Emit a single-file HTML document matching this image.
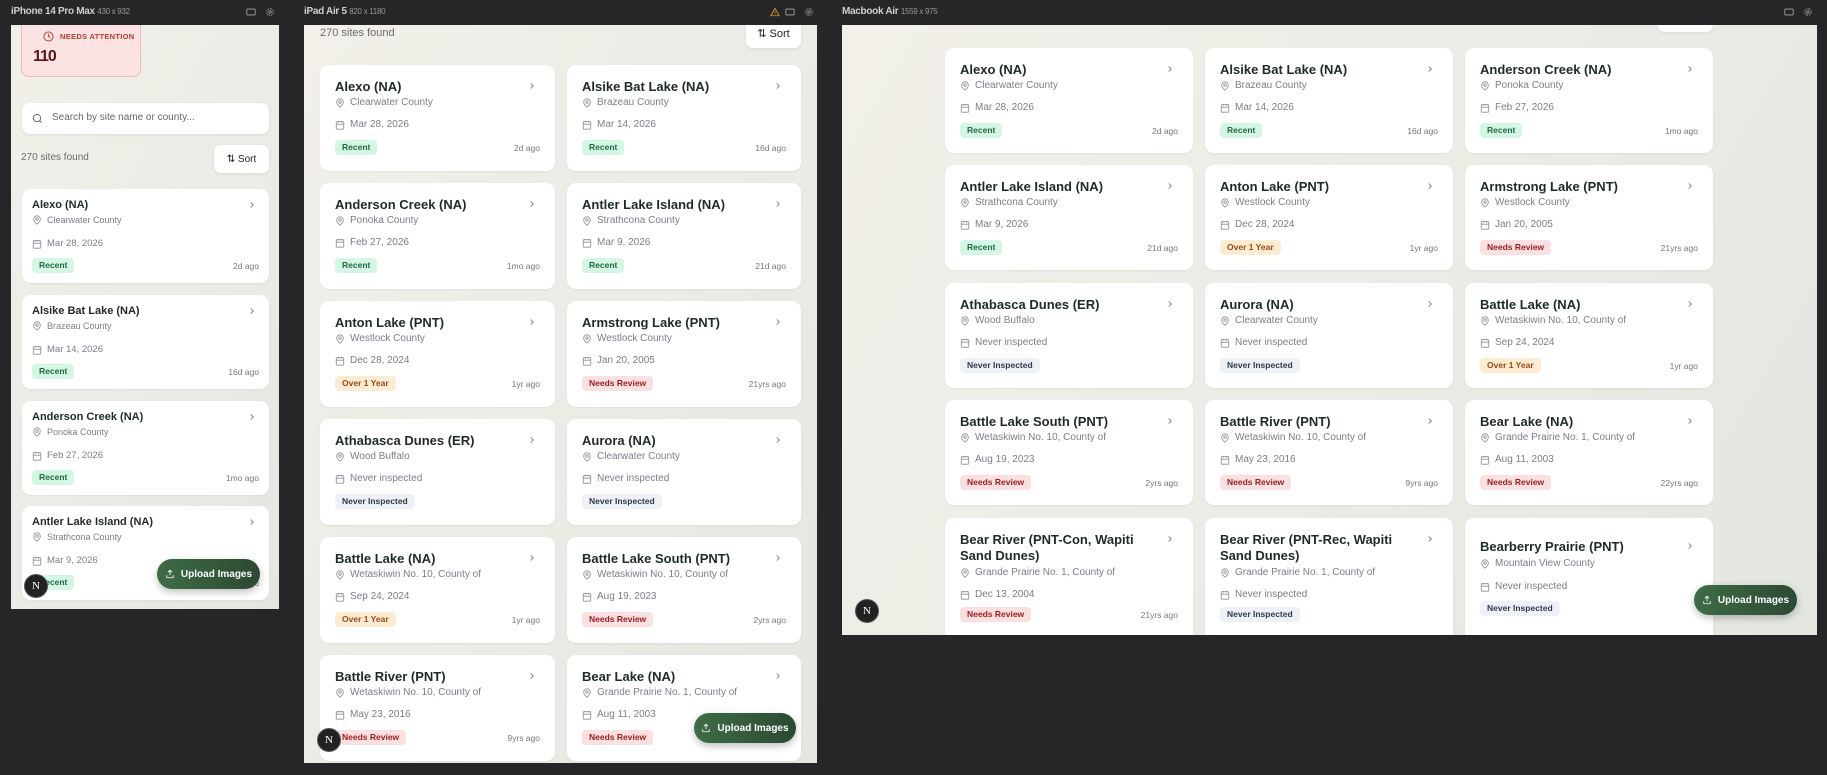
<!DOCTYPE html>
<html><head><meta charset="utf-8">
<style>
*{box-sizing:border-box;margin:0;padding:0}
body{width:1827px;height:775px;background:#262628;font-family:"Liberation Sans",sans-serif;position:relative;overflow:hidden}
.hdr{position:absolute;top:6px;font-size:10px;font-weight:bold;color:#d0d0d0;letter-spacing:-0.3px}
.hdr small{font-size:8px;font-weight:normal;color:#999}
.ico{position:absolute;top:7px}
.frame{position:absolute;overflow:hidden;background:linear-gradient(120deg,#f2f0e9 0%,#ebece6 50%,#e3e7e0 100%)}
.card{position:absolute;background:#fff;border-radius:9px;box-shadow:0 1px 2px rgba(0,0,0,.05)}
.card .t{position:absolute;left:15px;top:14px;right:40px;font-size:13px;font-weight:bold;color:#1f2b26;line-height:16px}
.card .ch{position:absolute;right:18px;top:16px;width:10px;height:10px}
.card .c,.card .d{position:absolute;left:15px;font-size:10px;color:#7a7f86;white-space:nowrap;display:flex;align-items:center;gap:5px}
.card .c{top:32px}
.card .d{top:54px}
.card .b{position:absolute;left:15px;top:75px;height:15px;line-height:15px;padding:0 7px;border-radius:4px;font-size:8.5px;font-weight:bold}
.card .a{position:absolute;right:15px;top:78px;font-size:8.5px;color:#777}
.ph .t{left:10px;top:8px;font-size:11px}
.ph .ch{right:12px;top:11px}
.ph .c,.ph .d,.ph .b{left:10px}
.ph .c{top:26px;font-size:9px}
.ph .d{top:49px;font-size:9.5px}
.ph .b{top:69px}
.ph .a{right:10px;top:72px}
.rec{background:#d4f6e4;color:#1e6a44}
.old{background:#fdebd2;color:#9a4b10}
.nr{background:#fbe0e1;color:#9b1c1c}
.ni{background:#eef1f6;color:#2f3a4a}
svg.s{width:10px;height:10px;flex:none}
.up{position:absolute;border-radius:16px;background:linear-gradient(90deg,#3e6c46,#2c4a32);color:#fff;font-size:10px;font-weight:bold;display:flex;align-items:center;justify-content:center;gap:6px;box-shadow:0 3px 8px rgba(0,0,0,.25)}
.n{position:absolute;width:24px;height:24px;border-radius:50%;background:#222;border:1px solid #555;color:#fff;font-size:11px;text-align:center;line-height:22px;font-family:"Liberation Serif",serif}
.sort{position:absolute;background:#fff;border-radius:7px;box-shadow:0 1px 3px rgba(0,0,0,.08);font-size:11px;color:#222;display:flex;align-items:center;justify-content:center;gap:5px}
.cnt{position:absolute;font-size:11px;color:#6b6b6b}
</style></head><body>
<svg width="0" height="0" style="position:absolute">
<defs>
<symbol id="pin" viewBox="0 0 24 24"><path d="M20 10c0 6-8 12-8 12s-8-6-8-12a8 8 0 0 1 16 0Z" fill="none" stroke="#8a8f96" stroke-width="2"/><circle cx="12" cy="10" r="3" fill="none" stroke="#8a8f96" stroke-width="2"/></symbol>
<symbol id="cal" viewBox="0 0 24 24"><rect x="3" y="4" width="18" height="18" rx="2" fill="none" stroke="#8a8f96" stroke-width="2"/><path d="M16 2v4M8 2v4M3 10h18" fill="none" stroke="#8a8f96" stroke-width="2"/></symbol>
<symbol id="chv" viewBox="0 0 24 24"><path d="m9 18 6-6-6-6" fill="none" stroke="#666" stroke-width="2"/></symbol>
<symbol id="upl" viewBox="0 0 24 24"><path d="M12 15V3M7 8l5-5 5 5M4 15v4a2 2 0 0 0 2 2h12a2 2 0 0 0 2-2v-4" fill="none" stroke="#fff" stroke-width="2"/></symbol>
<symbol id="mon" viewBox="0 0 24 24"><rect x="2" y="5" width="20" height="14" rx="2" fill="none" stroke="#aaa" stroke-width="2"/></symbol>
<symbol id="gear" viewBox="0 0 24 24"><circle cx="12" cy="12" r="3" fill="none" stroke="#aaa" stroke-width="2"/><circle cx="12" cy="12" r="8" fill="none" stroke="#aaa" stroke-width="2" stroke-dasharray="4 2.3"/></symbol>
</defs></svg>

<div class="hdr" style="left:11px">iPhone 14 Pro Max <small>430 x 932</small></div>
<svg class="ico" style="left:246px" width="10" height="10"><use href="#mon"/></svg>
<svg class="ico" style="left:265px" width="10" height="10"><use href="#gear"/></svg>
<div class="hdr" style="left:304px">iPad Air 5 <small>820 x 1180</small></div>
<svg class="ico" style="left:770px" width="10" height="10" viewBox="0 0 24 24"><path d="M12 3 2 21h20Z M12 10v5 M12 17v1" fill="none" stroke="#d4a017" stroke-width="2"/></svg>
<svg class="ico" style="left:785px" width="10" height="10"><use href="#mon"/></svg>
<svg class="ico" style="left:804px" width="10" height="10"><use href="#gear"/></svg>
<div class="hdr" style="left:842px">Macbook Air <small>1559 x 975</small></div>
<svg class="ico" style="left:1784px" width="10" height="10"><use href="#mon"/></svg>
<svg class="ico" style="left:1803px" width="10" height="10"><use href="#gear"/></svg>

<div class="frame" style="left:11px;top:25px;width:268px;height:584px">
  <div style="position:absolute;left:10px;top:-8px;width:120px;height:60px;background:#fbe3e3;border:1px solid #efb9b9;border-radius:8px">
    <svg style="position:absolute;left:21px;top:13px" width="11" height="11" viewBox="0 0 24 24"><circle cx="12" cy="12" r="10" fill="none" stroke="#c0392b" stroke-width="2"/><path d="M12 6v6l4 2" fill="none" stroke="#c0392b" stroke-width="2"/></svg>
    <div style="position:absolute;left:38px;top:14px;font-size:7.5px;font-weight:bold;color:#c0392b;letter-spacing:.3px">NEEDS ATTENTION</div>
    <div style="position:absolute;left:11px;top:30px;font-size:16px;font-weight:bold;color:#5a1616;letter-spacing:-1px">110</div>
  </div>
  <div style="position:absolute;left:11px;top:78px;width:247px;height:31px;background:#fff;border-radius:8px;box-shadow:0 1px 3px rgba(0,0,0,.08)">
    <svg style="position:absolute;left:10px;top:10px" width="11" height="11" viewBox="0 0 24 24"><circle cx="11" cy="11" r="8" fill="none" stroke="#666" stroke-width="2"/><path d="m21 21-4.3-4.3" stroke="#666" stroke-width="2"/></svg>
    <div style="position:absolute;left:30px;top:9px;font-size:10px;color:#666">Search by site name or county...</div>
  </div>
  <div class="cnt" style="left:10px;top:127px;font-size:10px">270 sites found</div>
  <div class="sort" style="left:203px;top:120px;width:55px;height:28px;font-size:10px">⇅ Sort</div>

  <div class="card ph" style="left:11px;top:164px;width:247px;height:94px"><div class="t">Alexo (NA)</div><svg class="ch"><use href="#chv"/></svg><div class="c"><svg class="s"><use href="#pin"/></svg>Clearwater County</div><div class="d"><svg class="s"><use href="#cal"/></svg>Mar 28, 2026</div><span class="b rec">Recent</span><span class="a">2d ago</span></div>
  <div class="card ph" style="left:11px;top:270px;width:247px;height:94px"><div class="t">Alsike Bat Lake (NA)</div><svg class="ch"><use href="#chv"/></svg><div class="c"><svg class="s"><use href="#pin"/></svg>Brazeau County</div><div class="d"><svg class="s"><use href="#cal"/></svg>Mar 14, 2026</div><span class="b rec">Recent</span><span class="a">16d ago</span></div>
  <div class="card ph" style="left:11px;top:376px;width:247px;height:94px"><div class="t">Anderson Creek (NA)</div><svg class="ch"><use href="#chv"/></svg><div class="c"><svg class="s"><use href="#pin"/></svg>Ponoka County</div><div class="d"><svg class="s"><use href="#cal"/></svg>Feb 27, 2026</div><span class="b rec">Recent</span><span class="a">1mo ago</span></div>
  <div class="card ph" style="left:11px;top:481px;width:247px;height:94px"><div class="t">Antler Lake Island (NA)</div><svg class="ch"><use href="#chv"/></svg><div class="c"><svg class="s"><use href="#pin"/></svg>Strathcona County</div><div class="d"><svg class="s"><use href="#cal"/></svg>Mar 9, 2026</div><span class="b rec">Recent</span><span class="a">21d ago</span></div>
  <div class="up" style="left:146px;top:534px;width:103px;height:30px"><svg width="10" height="10"><use href="#upl"/></svg>Upload Images</div>
  <div class="n" style="left:13px;top:549px">N</div>
</div>

<div class="frame" style="left:304px;top:25px;width:513px;height:738px">
  <div class="cnt" style="left:16px;top:2px">270 sites found</div>
  <div class="sort" style="left:442px;top:-6px;width:55px;height:29px">⇅ Sort</div>
  <div class="card" style="left:16px;top:40px;width:235px;height:106px"><div class="t">Alexo (NA)</div><svg class="ch"><use href="#chv"/></svg><div class="c"><svg class="s"><use href="#pin"/></svg>Clearwater County</div><div class="d"><svg class="s"><use href="#cal"/></svg>Mar 28, 2026</div><span class="b rec">Recent</span><span class="a">2d ago</span></div>
  <div class="card" style="left:263px;top:40px;width:234px;height:106px"><div class="t">Alsike Bat Lake (NA)</div><svg class="ch"><use href="#chv"/></svg><div class="c"><svg class="s"><use href="#pin"/></svg>Brazeau County</div><div class="d"><svg class="s"><use href="#cal"/></svg>Mar 14, 2026</div><span class="b rec">Recent</span><span class="a">16d ago</span></div>
  <div class="card" style="left:16px;top:158px;width:235px;height:106px"><div class="t">Anderson Creek (NA)</div><svg class="ch"><use href="#chv"/></svg><div class="c"><svg class="s"><use href="#pin"/></svg>Ponoka County</div><div class="d"><svg class="s"><use href="#cal"/></svg>Feb 27, 2026</div><span class="b rec">Recent</span><span class="a">1mo ago</span></div>
  <div class="card" style="left:263px;top:158px;width:234px;height:106px"><div class="t">Antler Lake Island (NA)</div><svg class="ch"><use href="#chv"/></svg><div class="c"><svg class="s"><use href="#pin"/></svg>Strathcona County</div><div class="d"><svg class="s"><use href="#cal"/></svg>Mar 9, 2026</div><span class="b rec">Recent</span><span class="a">21d ago</span></div>
  <div class="card" style="left:16px;top:276px;width:235px;height:106px"><div class="t">Anton Lake (PNT)</div><svg class="ch"><use href="#chv"/></svg><div class="c"><svg class="s"><use href="#pin"/></svg>Westlock County</div><div class="d"><svg class="s"><use href="#cal"/></svg>Dec 28, 2024</div><span class="b old">Over 1 Year</span><span class="a">1yr ago</span></div>
  <div class="card" style="left:263px;top:276px;width:234px;height:106px"><div class="t">Armstrong Lake (PNT)</div><svg class="ch"><use href="#chv"/></svg><div class="c"><svg class="s"><use href="#pin"/></svg>Westlock County</div><div class="d"><svg class="s"><use href="#cal"/></svg>Jan 20, 2005</div><span class="b nr">Needs Review</span><span class="a">21yrs ago</span></div>
  <div class="card" style="left:16px;top:394px;width:235px;height:106px"><div class="t">Athabasca Dunes (ER)</div><svg class="ch"><use href="#chv"/></svg><div class="c"><svg class="s"><use href="#pin"/></svg>Wood Buffalo</div><div class="d"><svg class="s"><use href="#cal"/></svg>Never inspected</div><span class="b ni">Never Inspected</span></div>
  <div class="card" style="left:263px;top:394px;width:234px;height:106px"><div class="t">Aurora (NA)</div><svg class="ch"><use href="#chv"/></svg><div class="c"><svg class="s"><use href="#pin"/></svg>Clearwater County</div><div class="d"><svg class="s"><use href="#cal"/></svg>Never inspected</div><span class="b ni">Never Inspected</span></div>
  <div class="card" style="left:16px;top:512px;width:235px;height:106px"><div class="t">Battle Lake (NA)</div><svg class="ch"><use href="#chv"/></svg><div class="c"><svg class="s"><use href="#pin"/></svg>Wetaskiwin No. 10, County of</div><div class="d"><svg class="s"><use href="#cal"/></svg>Sep 24, 2024</div><span class="b old">Over 1 Year</span><span class="a">1yr ago</span></div>
  <div class="card" style="left:263px;top:512px;width:234px;height:106px"><div class="t">Battle Lake South (PNT)</div><svg class="ch"><use href="#chv"/></svg><div class="c"><svg class="s"><use href="#pin"/></svg>Wetaskiwin No. 10, County of</div><div class="d"><svg class="s"><use href="#cal"/></svg>Aug 19, 2023</div><span class="b nr">Needs Review</span><span class="a">2yrs ago</span></div>
  <div class="card" style="left:16px;top:630px;width:235px;height:106px"><div class="t">Battle River (PNT)</div><svg class="ch"><use href="#chv"/></svg><div class="c"><svg class="s"><use href="#pin"/></svg>Wetaskiwin No. 10, County of</div><div class="d"><svg class="s"><use href="#cal"/></svg>May 23, 2016</div><span class="b nr">Needs Review</span><span class="a">9yrs ago</span></div>
  <div class="card" style="left:263px;top:630px;width:234px;height:106px"><div class="t">Bear Lake (NA)</div><svg class="ch"><use href="#chv"/></svg><div class="c"><svg class="s"><use href="#pin"/></svg>Grande Prairie No. 1, County of</div><div class="d"><svg class="s"><use href="#cal"/></svg>Aug 11, 2003</div><span class="b nr">Needs Review</span><span class="a">22yrs ago</span></div>
  <div class="up" style="left:390px;top:688px;width:102px;height:30px"><svg width="10" height="10"><use href="#upl"/></svg>Upload Images</div>
  <div class="n" style="left:13px;top:703px">N</div>
</div>

<div class="frame" style="left:842px;top:25px;width:975px;height:610px">
  <div class="sort" style="left:816px;top:-20px;width:55px;height:27px"></div>
  <div class="card" style="left:103px;top:23px;width:248px;height:105px"><div class="t">Alexo (NA)</div><svg class="ch"><use href="#chv"/></svg><div class="c"><svg class="s"><use href="#pin"/></svg>Clearwater County</div><div class="d"><svg class="s"><use href="#cal"/></svg>Mar 28, 2026</div><span class="b rec">Recent</span><span class="a">2d ago</span></div>
  <div class="card" style="left:363px;top:23px;width:248px;height:105px"><div class="t">Alsike Bat Lake (NA)</div><svg class="ch"><use href="#chv"/></svg><div class="c"><svg class="s"><use href="#pin"/></svg>Brazeau County</div><div class="d"><svg class="s"><use href="#cal"/></svg>Mar 14, 2026</div><span class="b rec">Recent</span><span class="a">16d ago</span></div>
  <div class="card" style="left:623px;top:23px;width:248px;height:105px"><div class="t">Anderson Creek (NA)</div><svg class="ch"><use href="#chv"/></svg><div class="c"><svg class="s"><use href="#pin"/></svg>Ponoka County</div><div class="d"><svg class="s"><use href="#cal"/></svg>Feb 27, 2026</div><span class="b rec">Recent</span><span class="a">1mo ago</span></div>
  <div class="card" style="left:103px;top:140px;width:248px;height:105px"><div class="t">Antler Lake Island (NA)</div><svg class="ch"><use href="#chv"/></svg><div class="c"><svg class="s"><use href="#pin"/></svg>Strathcona County</div><div class="d"><svg class="s"><use href="#cal"/></svg>Mar 9, 2026</div><span class="b rec">Recent</span><span class="a">21d ago</span></div>
  <div class="card" style="left:363px;top:140px;width:248px;height:105px"><div class="t">Anton Lake (PNT)</div><svg class="ch"><use href="#chv"/></svg><div class="c"><svg class="s"><use href="#pin"/></svg>Westlock County</div><div class="d"><svg class="s"><use href="#cal"/></svg>Dec 28, 2024</div><span class="b old">Over 1 Year</span><span class="a">1yr ago</span></div>
  <div class="card" style="left:623px;top:140px;width:248px;height:105px"><div class="t">Armstrong Lake (PNT)</div><svg class="ch"><use href="#chv"/></svg><div class="c"><svg class="s"><use href="#pin"/></svg>Westlock County</div><div class="d"><svg class="s"><use href="#cal"/></svg>Jan 20, 2005</div><span class="b nr">Needs Review</span><span class="a">21yrs ago</span></div>
  <div class="card" style="left:103px;top:258px;width:248px;height:105px"><div class="t">Athabasca Dunes (ER)</div><svg class="ch"><use href="#chv"/></svg><div class="c"><svg class="s"><use href="#pin"/></svg>Wood Buffalo</div><div class="d"><svg class="s"><use href="#cal"/></svg>Never inspected</div><span class="b ni">Never Inspected</span></div>
  <div class="card" style="left:363px;top:258px;width:248px;height:105px"><div class="t">Aurora (NA)</div><svg class="ch"><use href="#chv"/></svg><div class="c"><svg class="s"><use href="#pin"/></svg>Clearwater County</div><div class="d"><svg class="s"><use href="#cal"/></svg>Never inspected</div><span class="b ni">Never Inspected</span></div>
  <div class="card" style="left:623px;top:258px;width:248px;height:105px"><div class="t">Battle Lake (NA)</div><svg class="ch"><use href="#chv"/></svg><div class="c"><svg class="s"><use href="#pin"/></svg>Wetaskiwin No. 10, County of</div><div class="d"><svg class="s"><use href="#cal"/></svg>Sep 24, 2024</div><span class="b old">Over 1 Year</span><span class="a">1yr ago</span></div>
  <div class="card" style="left:103px;top:375px;width:248px;height:105px"><div class="t">Battle Lake South (PNT)</div><svg class="ch"><use href="#chv"/></svg><div class="c"><svg class="s"><use href="#pin"/></svg>Wetaskiwin No. 10, County of</div><div class="d"><svg class="s"><use href="#cal"/></svg>Aug 19, 2023</div><span class="b nr">Needs Review</span><span class="a">2yrs ago</span></div>
  <div class="card" style="left:363px;top:375px;width:248px;height:105px"><div class="t">Battle River (PNT)</div><svg class="ch"><use href="#chv"/></svg><div class="c"><svg class="s"><use href="#pin"/></svg>Wetaskiwin No. 10, County of</div><div class="d"><svg class="s"><use href="#cal"/></svg>May 23, 2016</div><span class="b nr">Needs Review</span><span class="a">9yrs ago</span></div>
  <div class="card" style="left:623px;top:375px;width:248px;height:105px"><div class="t">Bear Lake (NA)</div><svg class="ch"><use href="#chv"/></svg><div class="c"><svg class="s"><use href="#pin"/></svg>Grande Prairie No. 1, County of</div><div class="d"><svg class="s"><use href="#cal"/></svg>Aug 11, 2003</div><span class="b nr">Needs Review</span><span class="a">22yrs ago</span></div>
  <div class="card" style="left:103px;top:493px;width:248px;height:130px"><div class="t" style="top:14px">Bear River (PNT-Con, Wapiti Sand Dunes)</div><svg class="ch"><use href="#chv"/></svg><div class="c" style="top:49px"><svg class="s"><use href="#pin"/></svg>Grande Prairie No. 1, County of</div><div class="d" style="top:71px"><svg class="s"><use href="#cal"/></svg>Dec 13, 2004</div><span class="b nr" style="top:89px">Needs Review</span><span class="a" style="top:92px">21yrs ago</span></div>
  <div class="card" style="left:363px;top:493px;width:248px;height:130px"><div class="t" style="top:14px">Bear River (PNT-Rec, Wapiti Sand Dunes)</div><svg class="ch"><use href="#chv"/></svg><div class="c" style="top:49px"><svg class="s"><use href="#pin"/></svg>Grande Prairie No. 1, County of</div><div class="d" style="top:71px"><svg class="s"><use href="#cal"/></svg>Never inspected</div><span class="b ni" style="top:89px">Never Inspected</span></div>
  <div class="card" style="left:623px;top:493px;width:248px;height:130px"><div class="t" style="top:21px">Bearberry Prairie (PNT)</div><svg class="ch" style="top:23px"><use href="#chv"/></svg><div class="c" style="top:40px"><svg class="s"><use href="#pin"/></svg>Mountain View County</div><div class="d" style="top:63px"><svg class="s"><use href="#cal"/></svg>Never inspected</div><span class="b ni" style="top:83px">Never Inspected</span></div>
  <div class="up" style="left:852px;top:560px;width:103px;height:30px"><svg width="10" height="10"><use href="#upl"/></svg>Upload Images</div>
  <div class="n" style="left:13px;top:574px">N</div>
</div>
</body></html>
